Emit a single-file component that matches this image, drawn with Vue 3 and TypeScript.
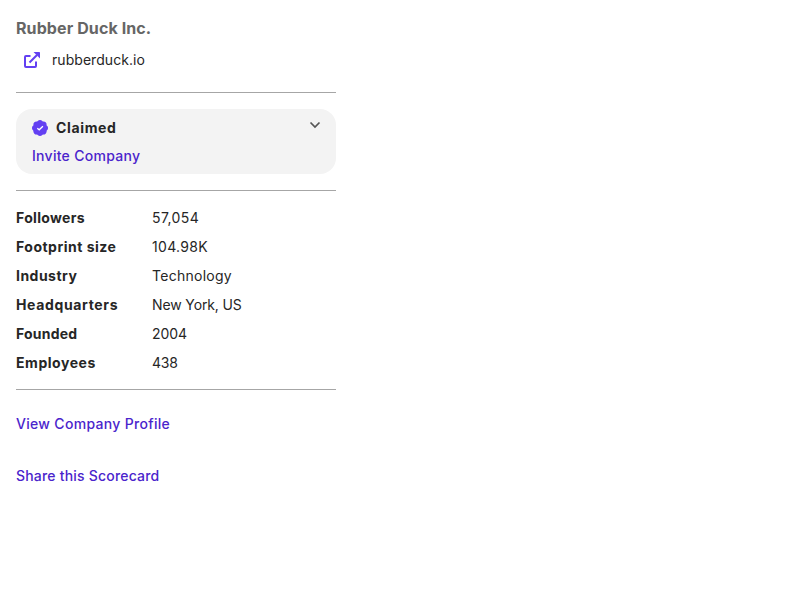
<script setup lang="ts">
interface Fact {
  label: string
  value: string
  labelTracking: number
  valueTracking: number
}

const facts: Fact[] = [
  { label: 'Followers', value: '57,054', labelTracking: 0.33, valueTracking: 0.42 },
  { label: 'Footprint size', value: '104.98K', labelTracking: 0.5, valueTracking: 0.32 },
  { label: 'Industry', value: 'Technology', labelTracking: 0.48, valueTracking: 0.27 },
  { label: 'Headquarters', value: 'New York, US', labelTracking: 0.65, valueTracking: -0.13 },
  { label: 'Founded', value: '2004', labelTracking: 0.2, valueTracking: -0.05 },
  { label: 'Employees', value: '438', labelTracking: 0.55, valueTracking: -0.2 },
]

const lobes = [0, 45, 90, 135, 180, 225, 270, 315]
</script>

<template>
  <aside class="card">
    <h2 class="name">Rubber Duck Inc.</h2>
    <div class="site">
      <svg class="site-icon" viewBox="0 0 16 16" width="16" height="16">
        <path fill="none" stroke="#6340f2" stroke-width="2" d="M6.500 4H2A1 1 0 0 0 1 5V14A1 1 0 0 0 2 15H11A1 1 0 0 0 12 14V9.500M5.500 10.500L13 3" />
        <path fill="#6340f2" d="M9.500 0H15.300A0.700 0.700 0 0 1 16 0.700V6.500Z" />
      </svg>
      <span class="domain">rubberduck.io</span>
    </div>
    <hr class="rule" />
    <section class="claim">
      <div class="claim-head">
        <svg class="badge" viewBox="0 0 16 16" width="16" height="16">
          <g fill="#6340f2">
            <circle cx="8" cy="8" r="7.100" />
            <circle v-for="angle in lobes" :key="angle" cx="8" cy="2.700" r="2.700" :transform="`rotate(${angle} 8 8)`" />
          </g>
          <path fill="none" stroke="#fff" stroke-width="1.300" d="M5.300 8.200L7.200 9.800L10.900 6.200" />
        </svg>
        <strong class="claim-title">Claimed</strong>
        <svg class="chevron" viewBox="0 0 12 8" width="12" height="8" fill="none" stroke="#555" stroke-width="1.700">
          <path d="M1.500 1.500L6 6L10.500 1.500" />
        </svg>
      </div>
      <a class="link invite">Invite Company</a>
    </section>
    <hr class="rule" />
    <dl class="facts">
      <div v-for="fact in facts" :key="fact.label" class="fact">
        <dt :style="{ letterSpacing: `${fact.labelTracking}px` }">{{ fact.label }}</dt>
        <dd :style="{ letterSpacing: `${fact.valueTracking}px` }">{{ fact.value }}</dd>
      </div>
    </dl>
    <hr class="rule" />
    <nav class="links">
      <a class="link profile">View Company Profile</a>
      <a class="link">Share this Scorecard</a>
    </nav>
  </aside>
</template>

<style>
body {
  background: #fff;
}
</style>

<style scoped>
.card {
  width: 320px;
  padding: 16px;
  font-family: Inter, sans-serif;
  font-size: 14px;
  line-height: 20px;
  letter-spacing: 0.2px;
  color: #262626;
}
.name {
  margin: 0;
  font-size: 16px;
  line-height: 24px;
  font-weight: 700;
  letter-spacing: 0.1px;
  color: #666;
}
.site {
  display: flex;
  align-items: center;
  gap: 12px;
  height: 40px;
  padding-left: 8px;
}
.domain {
  letter-spacing: 0.05px;
}
.rule {
  margin: 12px 0 16px;
  border: 0;
  height: 1px;
  background: #a6a6a6;
}
.claim {
  height: 65px;
  box-sizing: border-box;
  padding: 9px 16px;
  border-radius: 16px;
  background: #f3f3f3;
}
.claim + .rule {
  margin: 16px 0;
}
.claim-head {
  display: flex;
  align-items: center;
  height: 20px;
  margin-bottom: 8px;
}
.claim-title {
  margin-left: 8px;
  font-weight: 700;
  letter-spacing: 0.65px;
}
.chevron {
  margin: 0 -1px 6px auto;
}
.link {
  display: block;
  font-weight: 500;
  color: #4a24cc;
}
.invite {
  letter-spacing: 0.28px;
}
.profile {
  letter-spacing: 0.31px;
}
.facts {
  display: grid;
  gap: 9px;
  margin: 17px 0 16px;
}
.fact {
  display: grid;
  grid-template-columns: 136px 1fr;
}
dt {
  font-weight: 700;
}
dd {
  margin: 0;
}
.links {
  display: grid;
  gap: 32px;
  padding-top: 8px;
}
</style>
